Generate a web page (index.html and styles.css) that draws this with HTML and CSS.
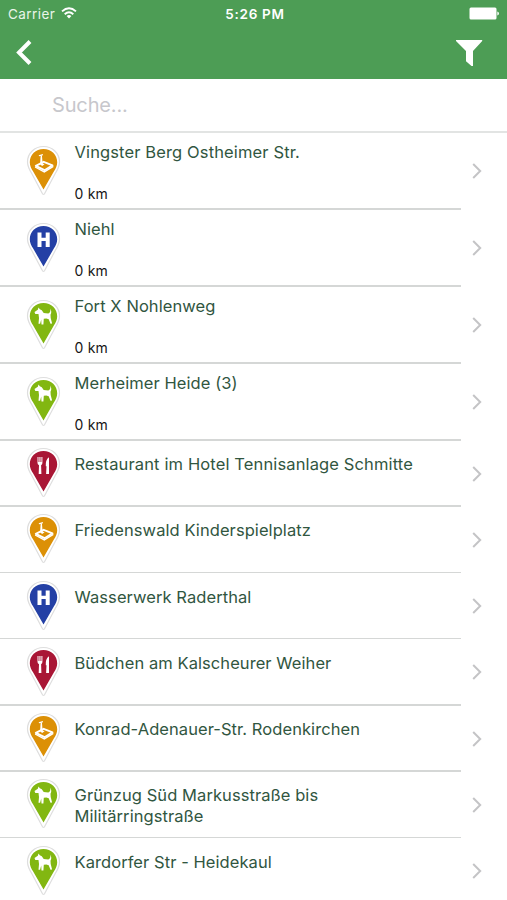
FILE: index.html
```html
<!DOCTYPE html>
<html lang="de">
<head>
<meta charset="utf-8">
<title>Suche</title>
<link rel="stylesheet" href="styles.css">
</head>
<body>
<svg class="sprite" width="0" height="0">
  <symbol id="pin" viewBox="0 0 36 53">
    <path class="rim" d="M18 1.500C9 1.500 2 8.300 2 17C2 21.500 4 25 6.400 28.800L16.300 47.500Q18 51.500 19.700 47.500L29.600 28.800C32 25 34 21.500 34 17C34 8.300 27 1.500 18 1.500Z"/>
    <path d="M18 4C10.200 4 4.300 9.800 4.300 17.300C4.300 20.800 5.700 23.500 7.500 26.300L18 44.500L28.500 26.300C30.300 23.500 31.700 20.800 31.700 17.300C31.700 9.800 25.800 4 18 4Z" fill="currentColor"/>
  </symbol>
  <symbol id="play" viewBox="-.5 0 36 53">
    <use href="#pin" width="36" height="53"/>
    <path d="M10.300 20.800L18.200 16.800L27 20.300L19 25.200Z" fill="none" stroke="#fff" stroke-width="1.900" stroke-linejoin="round"/>
    <path d="M9.600 22L18.800 26.900L27.800 21.300" fill="none" stroke="#fff" stroke-width="1.400"/>
    <path d="M13.200 10.200L17.300 9L17.500 10.200L13.600 11.300ZM15.200 10h1.200l.7 8.500 2 .8-2.500 1.800-2-1.800z" fill="#fff"/>
  </symbol>
  <symbol id="stop" viewBox="-.5 0 36 53">
    <use href="#pin" width="36" height="53"/>
    <path d="M12 10.500h4v5.200h4.200v-5.200h4v14.500h-4v-6H16v6H12z" fill="#fff"/>
  </symbol>
  <symbol id="dog" viewBox="-.5 0 36 53">
    <use href="#pin" width="36" height="53"/>
    <path d="M9 13L12.300 10.800L13 8.500L14.300 10.300L16.300 11.200L18.200 14L22.800 14.600Q25.600 13.200 24.700 9.500Q26.700 12.800 25 15.800L25.200 19L26.600 24.600L25 24.800L23.200 20.300L20.800 19.400L18.300 19.800L17.900 25.600L16 25.600L15.700 20.600L14.600 24.800L13 24.800L13.500 19L13 15L9.800 15Z" fill="#fff"/>
  </symbol>
  <symbol id="food" viewBox="-.5 0 36 53">
    <use href="#pin" width="36" height="53"/>
    <path d="M12 10h1v5h.9v-5h1.100v5h.9v-5h1v6q0 1.500-1.300 2.200l.3 8.800h-2.700l.3-8.800Q12 17.500 12 16ZM20.300 19.200Q19.700 13 23.500 10.200V27h-2.900l.4-7.800Z" fill="#fff"/>
  </symbol>
  <symbol id="next" viewBox="0 0 12 18"><path d="M2.200 2L9.200 9L2.200 16" fill="none" stroke="#c4c4c6" stroke-width="2"/></symbol>
</svg>

<header class="header">
  <div class="status">
    <div class="carrier">Carrier
      <svg class="wifi" width="16" height="12" viewBox="0 0 16 12"><g fill="none" stroke="#fff" stroke-width="1.900"><path d="M1 4.400Q8-1.800 15 4.400"/><path d="M3.700 7.200Q8 3.300 12.300 7.200"/></g><path d="M5.600 9Q8 7 10.400 9L8 11.500Z" fill="#fff"/></svg>
    </div>
    <div class="clock">5:26 PM</div>
    <svg class="battery" width="31" height="13" viewBox="0 0 31 13"><rect x=".5" y=".5" width="27" height="12" rx="1.500" fill="#fff"/><path d="M28.300 4.500Q30 5 30 6.500T28.300 8.500Z" fill="#fff"/></svg>
  </div>
  <nav class="nav">
    <svg width="18" height="27" viewBox="0 0 18 27"><path d="M15 2.500L4 13.500L15 24.500" fill="none" stroke="#fff" stroke-width="4"/></svg>
    <svg width="28" height="28" viewBox="0 0 28 28"><path d="M1 1H27.200V2L18 12V27H16.500L11 22.200V12L1 2Z" fill="#fff"/></svg>
  </nav>
</header>
<div class="search">Suche...</div>
<main class="list">
  <div class="row tall"><svg class="pin orange"><use href="#play"/></svg><div class="info"><div class="title wide">Vingster Berg Ostheimer Str.</div><div class="km">0 km</div></div><svg class="next"><use href="#next"/></svg></div>
  <div class="row tall"><svg class="pin blue"><use href="#stop"/></svg><div class="info"><div class="title">Niehl</div><div class="km">0 km</div></div><svg class="next"><use href="#next"/></svg></div>
  <div class="row tall"><svg class="pin green"><use href="#dog"/></svg><div class="info"><div class="title">Fort X Nohlenweg</div><div class="km">0 km</div></div><svg class="next"><use href="#next"/></svg></div>
  <div class="row tall"><svg class="pin green"><use href="#dog"/></svg><div class="info"><div class="title">Merheimer Heide (3)</div><div class="km">0 km</div></div><svg class="next"><use href="#next"/></svg></div>
  <div class="row"><svg class="pin red"><use href="#food"/></svg><div class="info"><div class="title wide">Restaurant im Hotel Tennisanlage Schmitte</div></div><svg class="next"><use href="#next"/></svg></div>
  <div class="row"><svg class="pin orange"><use href="#play"/></svg><div class="info"><div class="title">Friedenswald Kinderspielplatz</div></div><svg class="next"><use href="#next"/></svg></div>
  <div class="row"><svg class="pin blue"><use href="#stop"/></svg><div class="info"><div class="title">Wasserwerk Raderthal</div></div><svg class="next"><use href="#next"/></svg></div>
  <div class="row"><svg class="pin red"><use href="#food"/></svg><div class="info"><div class="title">Büdchen am Kalscheurer Weiher</div></div><svg class="next"><use href="#next"/></svg></div>
  <div class="row"><svg class="pin orange"><use href="#play"/></svg><div class="info"><div class="title">Konrad-Adenauer-Str. Rodenkirchen</div></div><svg class="next"><use href="#next"/></svg></div>
  <div class="row"><svg class="pin green"><use href="#dog"/></svg><div class="info"><div class="title">Grünzug Süd Markusstraße bis<br>Militärringstraße</div></div><svg class="next"><use href="#next"/></svg></div>
  <div class="row"><svg class="pin green"><use href="#dog"/></svg><div class="info"><div class="title">Kardorfer Str - Heidekaul</div></div><svg class="next"><use href="#next"/></svg></div>
</main>
</body>
</html>
```
FILE: styles.css
```css
* { box-sizing: border-box; }
body { margin: 0; height: 900px; overflow: hidden; background: #fff; font-family: Inter, "Liberation Sans", sans-serif; }
svg { display: block; flex: none; }
.sprite { width: 0; height: 0; float: left; }
.header { height: 79px; background: #4d9d55; color: #fff; }
.status { height: 27px; display: grid; grid-template-columns: 1fr auto 1fr; align-items: center; padding: 0 7px 0 8px; font-size: 13.5px; }
.carrier { display: flex; align-items: center; gap: 6px; letter-spacing: .45px; color: #e9f5e9; }
.wifi { margin-top: -2px; }
.clock { font-weight: 600; letter-spacing: .7px; padding-left: 2px; }
.battery { justify-self: end; }
.nav { height: 51px; display: flex; justify-content: space-between; align-items: center; padding: 0 24px 0 15px; }
.search { height: 54px; border-bottom: 2px solid #e2e4e3; padding-left: 52px; line-height: 52px; font-size: 20px; letter-spacing: -.15px; color: #c7c7cc; }
.row { height: 66.25px; display: grid; grid-template-columns: 74.5px 386.5px 1fr; }
.row.tall { height: 76.9px; }
.pin { width: 36px; height: 53px; margin: 6.500px 0 0 25px; }
.tall .pin { margin-top: 12px; }
.rim { fill: #fff; stroke: #dedede; stroke-width: 1.2; }
.orange { color: #dc9006; }
.blue { color: #2440a5; }
.green { color: #82b711; }
.red { color: #a91635; }
.info { position: relative; padding-top: 13.6px; }
.info::after { content: ""; position: absolute; left: -74.5px; right: 0; bottom: 0; height: 1.5px; background: #d5d7d6; }
.row:last-child .info::after { display: none; }
.tall .info { padding-top: 9px; }
.title { font-size: 16.5px; line-height: 20.5px; letter-spacing: .07px; color: #31563f; white-space: nowrap; }
.title.wide { letter-spacing: .13px; }
.km { margin-top: 22.4px; font-size: 14px; line-height: 18px; letter-spacing: .2px; color: #161616; }
.next { width: 12px; height: 18px; align-self: center; margin-left: 10px; }
```
